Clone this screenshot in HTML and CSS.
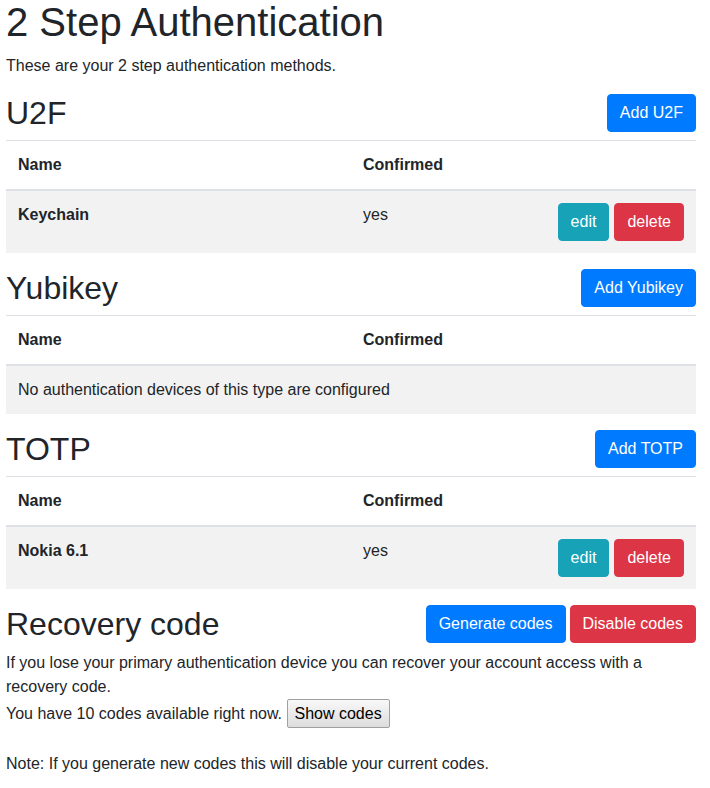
FILE: index.html
```html
<!DOCTYPE html>
<html>
<head>
<meta charset="utf-8">
<link rel="stylesheet" href="styles.css">
</head>
<body>
<div class="page">
  <h1 class="title">2 Step Authentication</h1>
  <p class="intro">These are your 2 step authentication methods.</p>

  <div class="section-head">
    <h2 class="section-title">U2F</h2>
    <button class="btn btn-primary">Add U2F</button>
  </div>
  <table class="table">
    <thead>
      <tr><th class="c-name">Name</th><th class="c-conf">Confirmed</th><th class="c-act"></th></tr>
    </thead>
    <tbody>
      <tr class="striped">
        <td class="c-name strong">Keychain</td>
        <td class="c-conf">yes</td>
        <td class="c-act"><div class="actions row-actions"><button class="btn btn-info">edit</button><button class="btn btn-danger">delete</button></div></td>
      </tr>
    </tbody>
  </table>

  <div class="section-head">
    <h2 class="section-title">Yubikey</h2>
    <button class="btn btn-primary">Add Yubikey</button>
  </div>
  <table class="table">
    <thead>
      <tr><th class="c-name">Name</th><th class="c-conf">Confirmed</th><th class="c-act"></th></tr>
    </thead>
    <tbody>
      <tr class="striped">
        <td colspan="3">No authentication devices of this type are configured</td>
      </tr>
    </tbody>
  </table>

  <div class="section-head">
    <h2 class="section-title">TOTP</h2>
    <button class="btn btn-primary">Add TOTP</button>
  </div>
  <table class="table">
    <thead>
      <tr><th class="c-name">Name</th><th class="c-conf">Confirmed</th><th class="c-act"></th></tr>
    </thead>
    <tbody>
      <tr class="striped">
        <td class="c-name strong">Nokia 6.1</td>
        <td class="c-conf">yes</td>
        <td class="c-act"><div class="actions row-actions"><button class="btn btn-info">edit</button><button class="btn btn-danger">delete</button></div></td>
      </tr>
    </tbody>
  </table>

  <div class="section-head">
    <h2 class="section-title">Recovery code</h2>
    <div class="actions head-actions">
      <button class="btn btn-primary">Generate codes</button><button class="btn btn-danger">Disable codes</button>
    </div>
  </div>
  <p class="recovery">If you lose your primary authentication device you can recover your account access with a recovery code.<br>You have 10 codes available right now. <button class="plain-btn">Show codes</button><br><br>Note: If you generate new codes this will disable your current codes.</p>
</div>
</body>
</html>
```

FILE: styles.css
```css
html, body {
  margin: 0;
  padding: 0;
  background: #fff;
}
body {
  font-family: "Liberation Sans", Arial, sans-serif;
  font-size: 16px;
  line-height: 1.5;
  color: #212529;
}
.page {
  width: 690px;
  padding: 0 6px;
}
.title {
  font-size: 40px;
  font-weight: 400;
  line-height: 44px;
  margin: 0 0 10px 0;
}
.intro {
  margin: 0 0 16px 0;
}
.section-head {
  display: flex;
  justify-content: space-between;
  align-items: center;
  height: 38px;
  margin-bottom: 8px;
}
.section-title {
  font-size: 32px;
  font-weight: 400;
  line-height: 38px;
  margin: 0;
}
.btn {
  display: block;
  box-sizing: border-box;
  height: 38px;
  font-family: "Liberation Sans", Arial, sans-serif;
  font-size: 16px;
  line-height: 24px;
  padding: 6px 12px;
  border: 1px solid transparent;
  border-radius: 4px;
  color: #fff;
  cursor: pointer;
  white-space: nowrap;
}
.btn-primary { background: #007bff; border-color: #007bff; }
.btn-info { background: #17a2b8; border-color: #17a2b8; }
.btn-danger { background: #dc3545; border-color: #dc3545; }
.actions {
  display: flex;
  justify-content: flex-end;
}
.row-actions { gap: 5px; }
.head-actions { gap: 4px; }
.table {
  width: 690px;
  border-collapse: collapse;
  margin-bottom: 16px;
}
.table th, .table td {
  padding: 12px;
  vertical-align: top;
  text-align: left;
  border-top: 1px solid #dee2e6;
}
.table thead th {
  border-bottom: 2px solid #dee2e6;
  font-weight: 700;
}
.table th.c-act { text-align: right; }
.c-name { width: 321px; }
.c-conf { width: 148px; }
.strong { font-weight: 700; }
.striped { background: #f2f2f2; }
.recovery {
  margin: 0;
}
.plain-btn {
  font-family: "Liberation Sans", Arial, sans-serif;
  font-size: 16px;
  line-height: 19px;
  color: #000;
  padding: 4px 7px;
  border: 1px solid #a0a0a0;
  border-radius: 2px;
  background: linear-gradient(#f8f8f8, #dddddd);
}
```
